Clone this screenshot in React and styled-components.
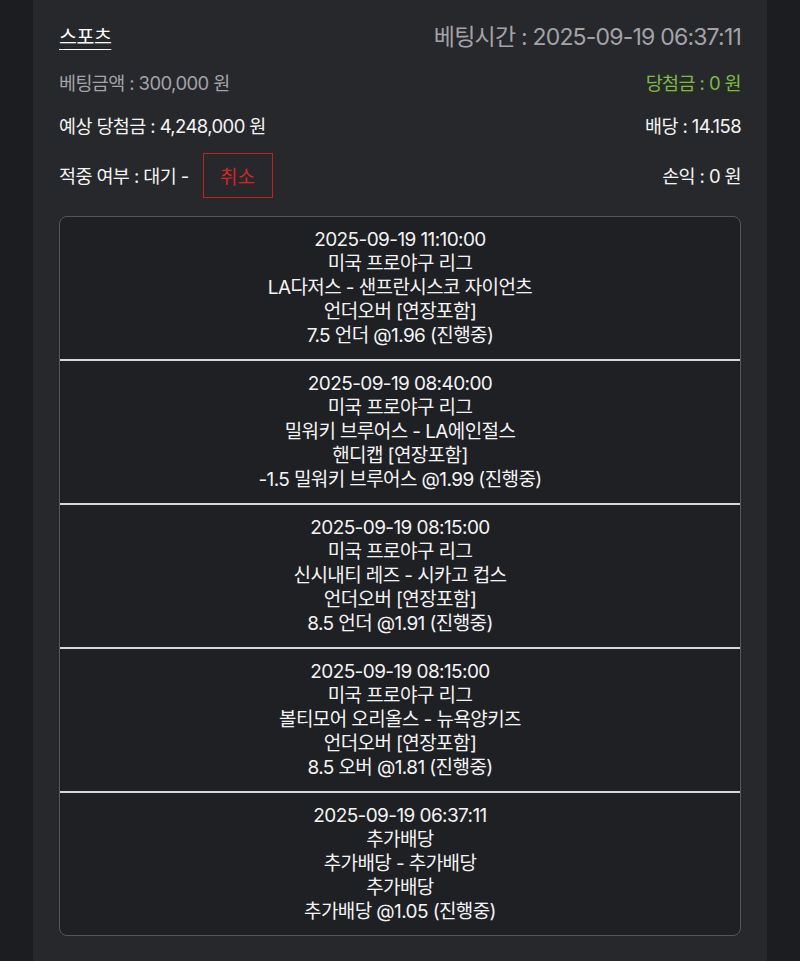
import React from "react";
import styled, { createGlobalStyle } from "styled-components";

const GlobalStyle = createGlobalStyle`
  html, body {
    margin: 0;
    padding: 0;
    background: #1c1d20;
  }
  body {
    font-family: Inter, "Noto Sans CJK KR", "Noto Sans", sans-serif;
    color: #f2f2f2;
  }
`;

const bets = [
  {
    time: "2025-09-19 11:10:00",
    league: "미국 프로야구 리그",
    match: "LA다저스 - 샌프란시스코 자이언츠",
    market: "언더오버 [연장포함]",
    pick: "7.5 언더 @1.96 (진행중)",
  },
  {
    time: "2025-09-19 08:40:00",
    league: "미국 프로야구 리그",
    match: "밀워키 브루어스 - LA에인절스",
    market: "핸디캡 [연장포함]",
    pick: "-1.5 밀워키 브루어스 @1.99 (진행중)",
  },
  {
    time: "2025-09-19 08:15:00",
    league: "미국 프로야구 리그",
    match: "신시내티 레즈 - 시카고 컵스",
    market: "언더오버 [연장포함]",
    pick: "8.5 언더 @1.91 (진행중)",
  },
  {
    time: "2025-09-19 08:15:00",
    league: "미국 프로야구 리그",
    match: "볼티모어 오리올스 - 뉴욕양키즈",
    market: "언더오버 [연장포함]",
    pick: "8.5 오버 @1.81 (진행중)",
  },
  {
    time: "2025-09-19 06:37:11",
    league: "추가배당",
    match: "추가배당 - 추가배당",
    market: "추가배당",
    pick: "추가배당 @1.05 (진행중)",
  },
];

const App = () => {
  return (
    <Page>
      <GlobalStyle />
      <Panel>
        <Row height="50px">
          <Title>스포츠</Title>
          <BetTime>베팅시간 : 2025-09-19 06:37:11</BetTime>
        </Row>
        <Row height="44px">
          <Info color="#a3a3a8">베팅금액 : 300,000 원</Info>
          <Info color="#7dbb3c">당첨금 : 0 원</Info>
        </Row>
        <Row height="42px">
          <Info>예상 당첨금 : 4,248,000 원</Info>
          <Info>배당 : 14.158</Info>
        </Row>
        <Row height="58px">
          <StatusGroup>
            <Info>적중 여부 : 대기 -</Info>
            <CancelButton>취소</CancelButton>
          </StatusGroup>
          <Info>손익 : 0 원</Info>
        </Row>
        <BetList>
          {bets.map((b, i) => (
            <BetItem key={i}>
              <Line>{b.time}</Line>
              <Line>{b.league}</Line>
              <Line>{b.match}</Line>
              <Line>{b.market}</Line>
              <Line>{b.pick}</Line>
            </BetItem>
          ))}
        </BetList>
      </Panel>
    </Page>
  );
};

export default App;

const Page = styled.div`
  min-height: 961px;
  display: flex;
  justify-content: center;
  background: #1c1d20;
`;

const Panel = styled.div`
  width: 734px;
  box-sizing: border-box;
  padding: 10px 26px 23px;
  background: #27282c;
  display: flex;
  flex-direction: column;
`;

const Row = styled.div`
  display: flex;
  align-items: center;
  justify-content: space-between;
  height: ${(p) => p.height};
`;

const Title = styled.span`
  font-size: 19.5px;
  color: #ffffff;
  text-decoration: underline;
  text-underline-offset: 5px;
  text-decoration-thickness: 1px;
  letter-spacing: -0.5px;
`;

const BetTime = styled.span`
  font-size: 23px;
  color: #a3a3a8;
  letter-spacing: -0.8px;
`;

const Info = styled.span`
  font-size: 18.5px;
  color: ${(p) => p.color || "#f4f4f4"};
  letter-spacing: -0.6px;
`;

const StatusGroup = styled.div`
  display: flex;
  align-items: center;
  gap: 14px;
`;

const CancelButton = styled.button`
  width: 70px;
  height: 45px;
  box-sizing: border-box;
  border: 1.5px solid #c41f1f;
  background: transparent;
  color: #d42626;
  font-family: inherit;
  font-size: 19px;
  padding: 0;
  margin-top: 1px;
`;

const BetList = styled.div`
  margin-top: 12px;
  border: 1px solid #55565b;
  border-radius: 8px;
  background: #1f2024;
  overflow: hidden;
`;

const BetItem = styled.div`
  display: flex;
  flex-direction: column;
  align-items: center;
  padding: 10.5px 0;
  & + & {
    border-top: 2px solid #d8d8d8;
  }
`;

const Line = styled.div`
  font-size: 19px;
  line-height: 24.2px;
  color: #f4f4f4;
  letter-spacing: -0.6px;
  white-space: nowrap;
`;
